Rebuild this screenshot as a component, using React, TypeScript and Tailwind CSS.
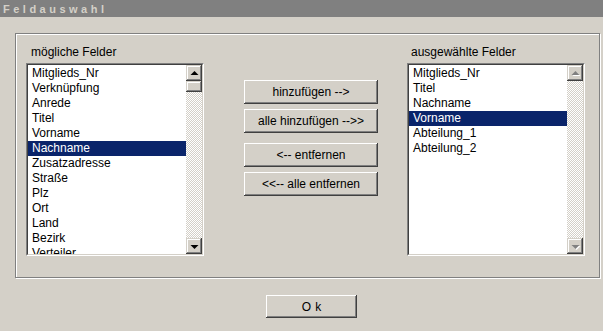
import React from 'react';

const leftItems = [
  'Mitglieds_Nr',
  'Verknüpfung',
  'Anrede',
  'Titel',
  'Vorname',
  'Nachname',
  'Zusatzadresse',
  'Straße',
  'Plz',
  'Ort',
  'Land',
  'Bezirk',
  'Verteiler',
];

const rightItems = ['Mitglieds_Nr', 'Titel', 'Nachname', 'Vorname', 'Abteilung_1', 'Abteilung_2'];

const raised =
  'bg-[#d4d0c8] shadow-[inset_-1px_-1px_0_#404040,inset_1px_1px_0_#d4d0c8,inset_-2px_-2px_0_#808080,inset_2px_2px_0_#ffffff]';

function Arrow({ dir, disabled }: { dir: 'up' | 'down'; disabled?: boolean }) {
  const tri = dir === 'up' ? '3.5,9 7.5,5 11.5,9' : '3.5,6 7.5,10 11.5,6';
  return (
    <div className={`w-[16px] h-[16px] ${raised} flex items-center justify-center`}>
      <svg width="14" height="14" viewBox="0 0 14 14">
        {disabled && <polygon points={tri} fill="#ffffff" transform="translate(1,1)" />}
        <polygon points={tri} fill={disabled ? '#808080' : '#000000'} />
      </svg>
    </div>
  );
}

function ListBox({
  items,
  selected,
  scrollable,
}: {
  items: string[];
  selected: string;
  scrollable?: boolean;
}) {
  return (
    <div className="w-[178px] h-[193px] border border-t-[#808080] border-l-[#808080] border-b-white border-r-white">
      <div className="w-full h-full border border-t-[#404040] border-l-[#404040] border-b-[#d4d0c8] border-r-[#d4d0c8] flex">
        <div className="flex-1 bg-white overflow-hidden pt-[1px]">
          {items.map((item) => (
            <div
              key={item}
              className={`h-[15px] leading-[15px] pl-[4px] whitespace-nowrap ${
                item === selected ? 'bg-[#0a246a] text-white' : 'text-black'
              }`}
            >
              {item}
            </div>
          ))}
        </div>
        <div className="w-[16px] flex flex-col">
          <Arrow dir="up" disabled={!scrollable} />
          {scrollable && <div className={`h-[11px] ${raised}`} />}
          <div className="flex-1 bg-[repeating-conic-gradient(#d4d0c8_0_25%,#ffffff_0_50%)] bg-[length:2px_2px]" />
          <Arrow dir="down" disabled={!scrollable} />
        </div>
      </div>
    </div>
  );
}

function PushButton({ label, className = '' }: { label: string; className?: string }) {
  return (
    <div
      className={`h-[24px] w-[134px] flex items-center justify-center leading-[15px] bg-[#d4d0c8] shadow-[inset_-1px_-1px_0_#404040,inset_1px_1px_0_#ffffff,inset_-2px_-2px_0_#808080] ${className}`}
    >
      {label}
    </div>
  );
}

export default function App() {
  return (
    <div className="w-[603px] h-[331px] bg-[#d4d0c8] text-[12px] text-black font-['Liberation_Sans',Arial,sans-serif] overflow-hidden">
      <div className="h-[17px] bg-[#808080] pl-[3px] flex items-center">
        <span className="text-[11px] font-bold tracking-[3.5px] text-[#d4d0c8] leading-[12px] mt-[1px]">
          Feldauswahl
        </span>
      </div>

      <div className="ml-[15px] mt-[16px] w-[585px] h-[245px] border border-[#808080] shadow-[inset_1px_1px_0_#ffffff,1px_1px_0_#ffffff] pl-[10px] pt-[11px] flex">
        <div className="w-[178px]">
          <div className="h-[15px] leading-[15px] pl-[5px] mb-[3px]">mögliche Felder</div>
          <ListBox items={leftItems} selected="Nachname" scrollable />
        </div>

        <div className="ml-[40px] mt-[35px] flex flex-col">
          <PushButton label="hinzufügen -->" />
          <PushButton label="alle hinzufügen -->>" className="mt-[5px]" />
          <PushButton label="<-- entfernen" className="mt-[10px]" />
          <PushButton label="<<-- alle entfernen" className="mt-[5px]" />
        </div>

        <div className="ml-[29px] w-[178px]">
          <div className="h-[15px] leading-[15px] pl-[4px] mb-[3px]">ausgewählte Felder</div>
          <ListBox items={rightItems} selected="Vorname" />
        </div>
      </div>

      <div className="mt-[17px] ml-[266px] w-[91px] h-[23px] flex items-center justify-center tracking-[4px] pl-[4px] bg-[#d4d0c8] shadow-[inset_-1px_-1px_0_#404040,inset_1px_1px_0_#ffffff,inset_-2px_-2px_0_#808080]">
        Ok
      </div>
    </div>
  );
}
